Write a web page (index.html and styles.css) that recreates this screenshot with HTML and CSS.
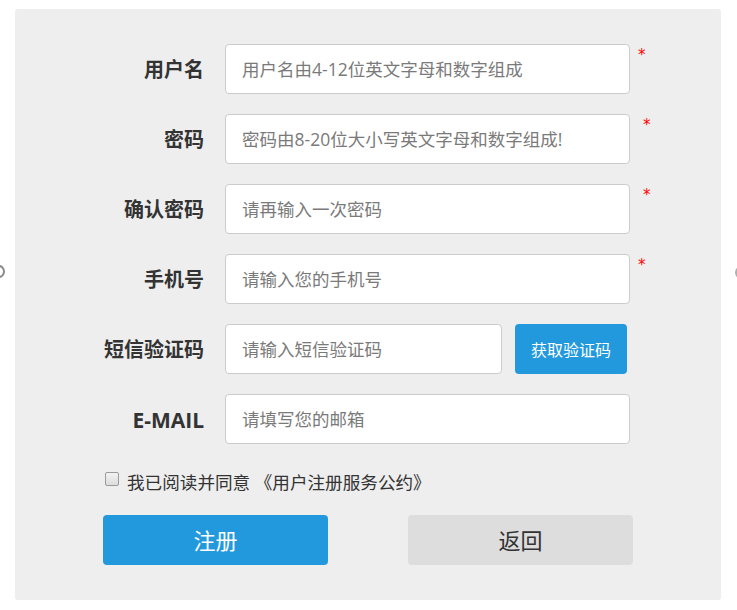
FILE: index.html
```html
<!DOCTYPE html>
<html lang="zh-CN">
<head>
<meta charset="utf-8">
<title>用户注册</title>
<link rel="stylesheet" href="styles.css">
</head>
<body>
<div class="page">
  <span class="edge edge-left"></span>
  <span class="edge edge-right"></span>
  <div class="panel">
    <form class="form">
      <div class="row">
        <label class="label">用户名</label>
        <input class="field" type="text" placeholder="用户名由4-12位英文字母和数字组成">
        <span class="star">*</span>
      </div>
      <div class="row">
        <label class="label">密码</label>
        <input class="field" type="password" placeholder="密码由8-20位大小写英文字母和数字组成!">
        <span class="star star-wide">*</span>
      </div>
      <div class="row">
        <label class="label">确认密码</label>
        <input class="field" type="password" placeholder="请再输入一次密码">
        <span class="star star-wide">*</span>
      </div>
      <div class="row">
        <label class="label">手机号</label>
        <input class="field" type="text" placeholder="请输入您的手机号">
        <span class="star">*</span>
      </div>
      <div class="row">
        <label class="label">短信验证码</label>
        <input class="field field-short" type="text" placeholder="请输入短信验证码">
        <button class="btn-code" type="button">获取验证码</button>
      </div>
      <div class="row">
        <label class="label label-latin">E-MAIL</label>
        <input class="field" type="text" placeholder="请填写您的邮箱">
      </div>
      <div class="agree">
        <input class="check" type="checkbox">
        <span class="agree-text">我已阅读并同意 《用户注册服务公约》</span>
      </div>
      <div class="actions">
        <button class="btn btn-primary" type="button">注册</button>
        <button class="btn btn-secondary" type="button">返回</button>
      </div>
    </form>
  </div>
</div>
</body>
</html>
```

FILE: styles.css
```css
* {
  box-sizing: border-box;
}

html, body {
  margin: 0;
  padding: 0;
  background: #ffffff;
}

body {
  font-family: "Open Sans", "Noto Sans CJK SC", sans-serif;
  color: #333333;
}

.page {
  position: relative;
  width: 737px;
  height: 610px;
  padding: 9px 16px 0 15px;
  overflow: hidden;
}

.edge {
  position: absolute;
  top: 265px;
  width: 12px;
  height: 13px;
  border: 2px solid #8a8a8a;
  border-radius: 50%;
}

.edge-left {
  left: -7px;
}

.edge-right {
  left: 735px;
  top: 266px;
  border-color: #b0b0b0;
}

.panel {
  background: #eeeeee;
  border-radius: 3px;
  width: 706px;
  height: 591px;
  padding: 35px 0 0 0;
}

.form {
  display: flex;
  flex-direction: column;
  margin: 0;
}

.row {
  display: flex;
  align-items: center;
  height: 50px;
  margin-bottom: 20px;
}

.row:nth-child(6) {
  margin-bottom: 0;
}

.label {
  width: 189px;
  margin-right: 21px;
  padding-top: 2px;
  text-align: right;
  font-size: 20px;
  font-weight: 700;
  color: #333333;
  line-height: 50px;
}

.label-latin {
  font-size: 21px;
}

.field {
  width: 405px;
  height: 50px;
  border: 1px solid #cccccc;
  border-radius: 4px;
  background: #ffffff;
  padding: 0 16px;
  font-family: "Open Sans", "Noto Sans CJK SC", sans-serif;
  font-size: 17.5px;
  color: #333333;
  outline: none;
}

.field::placeholder {
  color: #7a7a7a;
}

.field-short {
  width: 277px;
}

.star {
  align-self: flex-start;
  margin-left: 8px;
  color: #ff0000;
  font-size: 15px;
  line-height: 15px;
  padding-top: 4px;
  font-family: "DejaVu Sans", sans-serif;
}

.star-wide {
  margin-left: 13px;
}

.btn-code {
  margin-left: 13px;
  width: 112px;
  height: 50px;
  border: none;
  border-radius: 4px;
  background: #2399dd;
  color: #ffffff;
  font-family: "Open Sans", "Noto Sans CJK SC", sans-serif;
  font-size: 16px;
  padding: 0;
}

.agree {
  display: flex;
  align-items: flex-start;
  margin: 26px 0 0 90px;
  height: 24px;
}

.check {
  appearance: none;
  -webkit-appearance: none;
  width: 14px;
  height: 14px;
  margin: 2px 8px 0 0;
  border: 1px solid #9a9a9a;
  border-radius: 2px;
  background: linear-gradient(#f2f2f2, #dcdcdc);
}

.agree-text {
  font-size: 17.6px;
  line-height: 24px;
  color: #333333;
}

.actions {
  display: flex;
  gap: 80px;
  margin: 21px 0 0 88px;
}

.btn {
  width: 225px;
  height: 50px;
  border: none;
  border-radius: 4px;
  font-family: "Open Sans", "Noto Sans CJK SC", sans-serif;
  font-size: 22px;
  padding: 0 0 2px 0;
}

.btn-primary {
  background: #2399dd;
  color: #ffffff;
}

.btn-secondary {
  background: #dddddd;
  color: #333333;
}
```
